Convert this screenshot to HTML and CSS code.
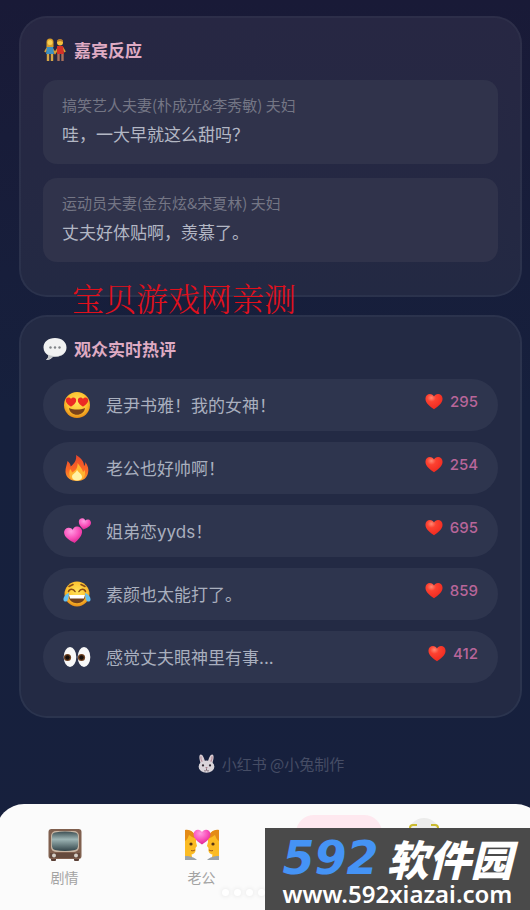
FILE: index.html
```
<!DOCTYPE html>
<html lang="zh-CN">

<head>
    <meta charset="UTF-8" />
    <meta name="viewport" content="width=device-width, initial-scale=1.0" />
    <title>观众实时热评</title>
    <link rel="stylesheet" href="styles.css">
</head>

<body>
    <svg class="defs" aria-hidden="true">
        <defs>
            <radialGradient id="face" cx="50%" cy="40%" r="60%">
                <stop offset="0" stop-color="#ffe45c" />
                <stop offset="0.65" stop-color="#fdc330" />
                <stop offset="1" stop-color="#e58a17" />
            </radialGradient>
            <radialGradient id="red" cx="35%" cy="25%" r="75%">
                <stop offset="0" stop-color="#ff8873" />
                <stop offset="0.35" stop-color="#fc4130" />
                <stop offset="1" stop-color="#f02a20" />
            </radialGradient>
            <radialGradient id="pink" cx="40%" cy="25%" r="80%">
                <stop offset="0" stop-color="#ff9ce2" />
                <stop offset="0.5" stop-color="#fb56bd" />
                <stop offset="1" stop-color="#d91f8d" />
            </radialGradient>
            <linearGradient id="flame" x1="0" y1="0" x2="0" y2="1">
                <stop offset="0" stop-color="#e8452c" />
                <stop offset="0.6" stop-color="#fb6a25" />
                <stop offset="1" stop-color="#fda32c" />
            </linearGradient>
            <linearGradient id="screen" x1="0" y1="0" x2="0" y2="1">
                <stop offset="0" stop-color="#3d4f53" />
                <stop offset="0.4" stop-color="#9db5b5" />
                <stop offset="1" stop-color="#33454a" />
            </linearGradient>
            <symbol id="heart" viewBox="0 0 20 18">
                <path d="M10 17.500C6 15 .500 11 .500 6C.500 3 2.800 .800 5.500 .800C7.500 .800 9.200 1.800 10 3.500C10.800 1.800 12.500 .800 14.500 .800C17.200 .800 19.500 3 19.500 6C19.500 11 14 15 10 17.500Z" />
            </symbol>
        </defs>
    </svg>

    <main class="content">
        <section class="card">
            <h2>
                <svg class="title-icon" viewBox="0 0 24 24">
                    <path d="M5 9L2 14M19 9l3 5M8 9l4 6 4-6" stroke="#d99f33" stroke-width="2" fill="none" />
                    <path d="M4 8h6l1 8H3z" fill="#3d8fc0" />
                    <path d="M14 8h6l1 8h-7z" fill="#d43128" />
                    <path d="M5 16v7M9 16v7" stroke="#d5a648" stroke-width="2.400" />
                    <path d="M15.500 16v7M19.500 16v7" stroke="#a9705b" stroke-width="2.400" />
                    <path d="M3.500 9V4a3.500 3.500 0 0 1 7 0v5z" fill="#d89d2b" />
                    <circle cx="7" cy="4.500" r="2.500" fill="#f8cf52" />
                    <circle cx="17" cy="4.500" r="3" fill="#f5c23f" />
                    <path d="M14 4a3 3 0 0 1 6 0l-3-1z" fill="#b77a27" />
                </svg>
                嘉宾反应
            </h2>
            <div class="notes">
                <div class="note">
                    <p class="who">搞笑艺人夫妻(朴成光&amp;李秀敏) 夫妇</p>
                    <p class="say">哇，一大早就这么甜吗？</p>
                </div>
                <div class="note">
                    <p class="who">运动员夫妻(金东炫&amp;宋夏林) 夫妇</p>
                    <p class="say">丈夫好体贴啊，羡慕了。</p>
                </div>
            </div>
        </section>

        <section class="card">
            <h2>
                <svg class="title-icon" viewBox="0 0 24 24">
                    <path d="M12 1C5 1 .500 5 .500 10.500c0 3.500 2 6.500 5 8-.2 2-1 3-2.500 4.500 3 0 5.500-1.300 7-3.300l2 .1c7 0 11.500-4 11.500-9.300S19 1 12 1z" fill="#f1f2f2" />
                    <path d="M2 15c3 5 16 6 20 0-2 3-5 4.800-10 4.800h-2c-2 2-4 3.200-7 3.200 1.500-1.500 2.300-2.500 2.500-4.500z" fill="#c2c5c8" />
                    <g fill="#808487">
                        <circle cx="7.500" cy="10.500" r="1.200" />
                        <circle cx="12" cy="10.500" r="1.200" />
                        <circle cx="16.500" cy="10.500" r="1.200" />
                    </g>
                </svg>
                观众实时热评
            </h2>
            <ul class="comments">
                <li class="comment">
                    <svg class="emoji" viewBox="0 0 28 28">
                        <circle cx="14" cy="14" r="13" fill="url(#face)" />
                        <use href="#heart" x="2.500" y="6" width="11" height="10" fill="#ec2b24" />
                        <use href="#heart" x="14.500" y="6" width="11" height="10" fill="#ec2b24" />
                        <path d="M6 17c5 2 11 2 16 0-1 9-15 9-16 0z" fill="#7a421a" />
                    </svg>
                    <span class="text">是尹书雅！我的女神！</span>
                    <span class="likes"><svg class="heart"><use href="#heart" fill="url(#red)" /></svg>295</span>
                </li>
                <li class="comment">
                    <svg class="emoji" viewBox="0 0 28 28">
                        <path d="M13 1c7 4 8 8 8 11 1-1 1.500-2.500 1.300-4C25 12 26 15 25 19c-1 5-5 8-11 8S3 24 2.500 18C2.200 14 4 11 4.500 7c2 1.500 3 3 3.200 5.500C11 10 14 6 13 1z" fill="url(#flame)" />
                        <path d="M14.500 9c3 4 5 6 5.500 9 1-.5 1.500-1.500 1.700-2.500C23 21 21 26.500 14 26.500S5 21 7 15c1 1 1.700 2 2 3.500 4-2 6-5 5.500-9.500z" fill="#ffb52f" />
                        <path d="M14 16c2 3 5 4 5 7 0 2-2 3.500-5 3.500S9 25 9 22.500c0-2.500 4-3.500 5-6.500z" fill="#fff3a4" />
                    </svg>
                    <span class="text">老公也好帅啊！</span>
                    <span class="likes"><svg class="heart"><use href="#heart" fill="url(#red)" /></svg>254</span>
                </li>
                <li class="comment">
                    <svg class="emoji" viewBox="0 0 28 28">
                        <use href="#heart" x="1" y="9" width="19" height="18" fill="url(#pink)" transform="rotate(-8 10 18)" />
                        <use href="#heart" x="15" y="1" width="13" height="12" fill="url(#pink)" transform="rotate(12 21 7)" />
                    </svg>
                    <span class="text">姐弟恋yyds！</span>
                    <span class="likes"><svg class="heart"><use href="#heart" fill="url(#red)" /></svg>695</span>
                </li>
                <li class="comment">
                    <svg class="emoji" viewBox="0 0 28 28">
                        <circle cx="14" cy="14" r="12.500" fill="url(#face)" />
                        <path d="M5.500 11.500c1-3 5-3 6.500 0M16 11.500c1.500-3 5.500-3 6.500 0M6 6.500l4-2M22 6.500l-4-2" stroke="#8a4d16" stroke-width="1.600" fill="none" stroke-linecap="round" />
                        <path d="M5.500 15h17c0 11-17 11-17 0z" fill="#70401d" />
                        <path d="M6 15h16l-1 3.500H7z" fill="#fff" />
                        <path d="M6 13c-3 1-6 4-5.500 7 .5 2 3.500 2 4.300 0 .8-2 1-5 1.200-7zM22 13c3 1 6 4 5.500 7-.5 2-3.500 2-4.300 0-.8-2-1-5-1.200-7z" fill="#62bff0" />
                    </svg>
                    <span class="text">素颜也太能打了。</span>
                    <span class="likes"><svg class="heart"><use href="#heart" fill="url(#red)" /></svg>859</span>
                </li>
                <li class="comment">
                    <svg class="emoji" viewBox="0 0 28 28">
                        <ellipse cx="7" cy="14" rx="6.300" ry="10" fill="#f8f8f8" />
                        <ellipse cx="21" cy="14" rx="6.300" ry="10" fill="#f8f8f8" />
                        <circle cx="4.500" cy="14.500" r="3.600" fill="#6e4020" />
                        <circle cx="18.500" cy="14.500" r="3.600" fill="#6e4020" />
                        <circle cx="4.500" cy="14.500" r="2.200" fill="#17100c" />
                        <circle cx="18.500" cy="14.500" r="2.200" fill="#17100c" />
                    </svg>
                    <span class="text">感觉丈夫眼神里有事...</span>
                    <span class="likes"><svg class="heart"><use href="#heart" fill="url(#red)" /></svg>412</span>
                </li>
            </ul>
        </section>

        <footer class="credit">
            <svg class="rabbit" viewBox="0 0 20 20">
                <path d="M4 10C2 5 2 .500 4 .500S7.500 4 8.500 8h3C12.500 4 14 .500 16 .500S18 5 16 10z" fill="#d8cdd3" />
                <path d="M4.300 2.500c-.5 2 .5 5 1.700 6M15.700 2.500c.5 2-.5 5-1.700 6" stroke="#b58a98" stroke-width="1.200" fill="none" />
                <ellipse cx="10" cy="13.300" rx="8.300" ry="6.500" fill="#d9d4da" />
                <circle cx="6.300" cy="12" r="1.200" fill="#322a33" />
                <circle cx="13.700" cy="12" r="1.200" fill="#322a33" />
                <path d="M8.700 14h2.600L10 15.600z" fill="#9c6472" />
                <path d="M10 15.500v1.500M7.500 17.500c1 .6 2 .2 2.500-.5.500.7 1.500 1.100 2.500.5" stroke="#77646e" fill="none" />
            </svg>
            小红书 @小兔制作
        </footer>
    </main>

    <nav class="tabs">
        <button class="tab" type="button">
            <svg class="tab-icon" viewBox="0 0 34 34">
                <rect x="3" y="29" width="5" height="4" rx="1" fill="#5a3f35" />
                <rect x="26" y="29" width="5" height="4" rx="1" fill="#5a3f35" />
                <rect x="0.500" y="1" width="33" height="30" rx="3" fill="#80604f" />
                <rect x="3" y="3" width="28" height="21" rx="5" fill="#c7b5a3" />
                <path d="M7 4.500q10-2 20 0 3 .5 3 4 .5 5 0 10-.3 3-3 3.500-10 2-20 0-2.700-.5-3-3.500-.5-5 0-10 0-3.500 3-4z" fill="url(#screen)" />
                <rect x="2" y="25" width="30" height="5" fill="#654a3d" />
                <circle cx="6" cy="27.500" r="2" fill="#d5cfc7" />
                <circle cx="28" cy="27.500" r="2" fill="#d5cfc7" />
            </svg>
            剧情
        </button>
        <button class="tab" type="button">
            <svg class="tab-icon" viewBox="0 0 34 34">
                <path d="M0 3c7-2 12 4 11 11l1 4-1.500 2c.5 4-1 6-4 6.500L7 29H0z" fill="#fbbb24" />
                <path d="M34 3c-7-2-12 4-11 11l-1 4 1.500 2c-.5 4 1 6 4 6.500L27 29h7z" fill="#fbbb24" />
                <path d="M0 2c6-1 10 3 10 8-3 0-5-3-6-3-1 3-2 5-4 6z" fill="#e48b16" />
                <path d="M34 2c-6-1-10 3-10 8 3 0 5-3 6-3 1 3 2 5 4 6z" fill="#e48b16" />
                <circle cx="6" cy="16" r="1.600" fill="#583515" />
                <circle cx="28" cy="16" r="1.600" fill="#583515" />
                <path d="M6 22.500q2 1 4-.5M28 22.500q-2 1-4-.5" stroke="#a45b18" fill="none" />
                <path d="M0 28c6 0 10 2 12 4H0zM34 28c-6 0-10 2-12 4h12z" fill="#9aa2a9" />
                <use href="#heart" x="8" y="1" width="18" height="16" fill="url(#pink)" />
            </svg>
            老公
        </button>
        <button class="tab active" type="button"></button>
        <button class="tab" type="button"></button>

        <svg class="float-icon" viewBox="0 0 34 34">
            <circle cx="17" cy="17" r="16" fill="#ececeb" />
            <path d="M3 11q0-3 3-3h4M24 8h4q3 0 3 3" stroke="#cbbb2e" stroke-width="2" fill="none" />
        </svg>
        <div class="dots">
            <i></i><i></i><i></i><i></i>
        </div>
    </nav>

    <div class="stamp">宝贝游戏网亲测</div>

    <aside class="site-mark">
        <div class="site-name"><b>592</b>软件园</div>
        <div class="site-url">www.592xiazai.com</div>
    </aside>
</body>

</html>
```
FILE: styles.css
```
* {
    padding: 0;
    margin: 0;
    box-sizing: border-box;
}

body {
    position: relative;
    min-height: 100vh;
    display: flex;
    flex-direction: column;
    overflow: hidden;
    font-family: "Noto Sans CJK SC", sans-serif;
    background: linear-gradient(#191a37, #16203d 45%, #17203d);
}

.defs {
    position: absolute;
    width: 0;
    height: 0;
}

.content {
    padding: 16px 8px 0 19px;
}

.card {
    padding: 22px 22px 33px;
    margin-bottom: 18px;
    border: 2px solid rgba(255, 255, 255, 0.09);
    border-radius: 28px;
    background: linear-gradient(#272743, #232943);
    background-clip: padding-box;
}

.card + .card {
    background: #232a44;
    background-clip: padding-box;
}

.card h2 {
    display: flex;
    align-items: center;
    gap: 7px;
    margin-bottom: 20px;
    font-size: 17px;
    font-weight: 700;
    line-height: 20px;
    color: #dfabc3;
}

.title-icon {
    width: 24px;
    height: 24px;
    margin: -2px 0;
}

.notes {
    display: flex;
    flex-direction: column;
    gap: 14px;
}

.note {
    padding: 12px 19px 14px;
    border-radius: 14px;
    background: #30334b;
}

.who {
    font-size: 15px;
    line-height: 26px;
    color: #747685;
}

.say {
    font-size: 17px;
    line-height: 32px;
    color: #b3b7c4;
}

.comments {
    display: flex;
    flex-direction: column;
    gap: 11px;
    list-style: none;
}

.comment {
    display: flex;
    align-items: center;
    height: 52px;
    padding: 0 20px;
    border-radius: 26px;
    background: #2e354e;
}

.emoji {
    width: 28px;
    height: 28px;
    margin-right: 15px;
}

.text {
    flex: 1;
    padding-bottom: 2px;
    font-family: Inter, "Noto Sans CJK SC", sans-serif;
    font-size: 17px;
    color: #a9afbe;
}

.likes {
    display: flex;
    align-items: center;
    gap: 7px;
    padding-bottom: 7px;
    font-family: Inter, sans-serif;
    font-size: 15px;
    font-weight: 500;
    color: #b9669a;
}

.heart {
    width: 18px;
    height: 17px;
}

.credit {
    display: flex;
    align-items: center;
    justify-content: center;
    gap: 6px;
    height: 68px;
    padding-bottom: 14px;
    font-size: 15px;
    color: #464d65;
}

.rabbit {
    width: 19px;
    height: 19px;
}

.tabs {
    position: relative;
    flex: 1;
    display: grid;
    grid-template-columns: repeat(4, 1fr);
    min-height: 106px;
    margin: 0 -14px 0 -4px;
    padding: 11px 0 16px;
    border-radius: 28px 28px 0 0;
    background: #fbfbfb;
}

.tab {
    display: flex;
    flex-direction: column;
    align-items: center;
    gap: 5px;
    width: 86px;
    padding-top: 13px;
    justify-self: center;
    border: 0;
    border-radius: 18px;
    background: none;
    font-family: inherit;
    font-size: 14px;
    line-height: 20px;
    color: #a3a3a3;
}

.tab.active {
    background: #fee8ef;
}

.tab-icon {
    width: 34px;
    height: 34px;
}

.float-icon {
    position: absolute;
    left: 411px;
    top: 13px;
    width: 34px;
    height: 34px;
}

.dots {
    position: absolute;
    left: 226px;
    bottom: 14px;
    display: flex;
    gap: 5px;
}

.dots i {
    width: 7px;
    height: 7px;
    border-radius: 50%;
    background: #fff;
    box-shadow: 0 0 5px rgba(0, 0, 0, 0.1);
}

/* watermarks */
.stamp {
    position: absolute;
    left: 72px;
    top: 274px;
    font-family: "Noto Serif CJK SC", "Noto Sans CJK SC", serif;
    font-size: 32px;
    font-weight: 300;
    line-height: 46px;
    color: #e0101c;
}

.site-mark {
    position: absolute;
    right: 0;
    bottom: 0;
    width: 265px;
    height: 82px;
    padding-top: 9px;
    text-align: center;
    white-space: nowrap;
    color: #fff;
    background: #4a4a4a;
}

.site-name {
    display: flex;
    align-items: center;
    justify-content: center;
    gap: 8px;
    font-size: 42px;
    font-style: italic;
    font-weight: 900;
    line-height: 42px;
}

.site-name b {
    font-family: "DejaVu Sans", sans-serif;
    font-size: 46px;
    font-weight: 700;
    color: #4593f5;
}

.site-url {
    padding-top: 2px;
    font-family: "Noto Sans", sans-serif;
    font-size: 24px;
    font-weight: 600;
    line-height: 26px;
}
```
